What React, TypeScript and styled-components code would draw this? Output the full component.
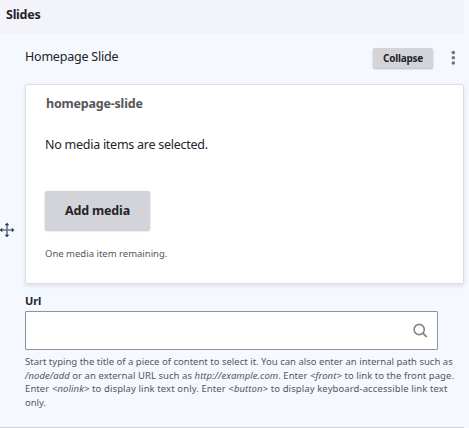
import React from "react";
import styled, { createGlobalStyle } from "styled-components";

const GlobalStyle = createGlobalStyle`
  * { box-sizing: border-box; }
  body {
    margin: 0;
    background: #f5f8ff;
    color: #232429;
    font-family: "Noto Sans", "Open Sans", sans-serif;
    overflow: hidden;
  }
`;

const Field = styled.section`
  width: 464px;
  height: 428px;
  border-bottom: 1px solid #d3d4d9;
`;

const FieldHeader = styled.h4`
  margin: 0;
  height: 34px;
  padding: 0 6px;
  background: #f3f4f9;
  font-size: 12.5px;
  font-weight: 700;
  line-height: 29px;
  letter-spacing: -0.25px;
`;

const Row = styled.div`
  display: grid;
  grid-template-columns: 25px 439px;
`;

const DragHandle = styled.div`
  padding-top: 188px;
  svg { display: block; }
`;

const TopBar = styled.div`
  display: flex;
  align-items: center;
  height: 50px;
  padding: 0 7px 2px 0;
`;

const TypeLabel = styled.span`
  flex: 1;
  padding-bottom: 2px;
  font-size: 12.5px;
  line-height: 18px;
  letter-spacing: -0.22px;
`;

const Button = styled.button<{ $small?: boolean }>`
  display: block;
  border: 0;
  padding: 0;
  border-radius: 2px;
  background: #d3d4d9;
  color: #232429;
  font-family: inherit;
  font-weight: 700;
  box-shadow: 0 1px 2px rgba(0, 0, 0, 0.25);
  width: ${(p) => (p.$small ? 60 : 105)}px;
  height: ${(p) => (p.$small ? 20 : 39)}px;
  font-size: ${(p) => (p.$small ? 10 : 12.5)}px;
  line-height: ${(p) => (p.$small ? 20 : 38)}px;
  letter-spacing: ${(p) => (p.$small ? -0.25 : -0.15)}px;
`;

const MenuDots = styled.svg`
  display: block;
  margin-left: 16px;
`;

const Card = styled.div`
  height: 200px;
  padding: 10px 19px 0;
  border: 1px solid #dcdee5;
  border-radius: 2px;
  background: #fff;
  box-shadow: 0 2px 4px rgba(0, 0, 0, 0.1);
`;

const Legend = styled.div`
  height: 18px;
  padding-left: 1px;
  font-size: 12.5px;
  font-weight: 700;
  line-height: 18px;
  letter-spacing: -0.2px;
  color: #55565b;
`;

const EmptyText = styled.p`
  margin: 23px 0 37px;
  font-size: 12.5px;
  line-height: 18px;
  letter-spacing: -0.26px;
`;

const Remaining = styled.div`
  margin-top: 17px;
  font-size: 9.5px;
  line-height: 14px;
  color: #55565b;
`;

const Label = styled.label`
  display: block;
  margin-top: 8px;
  height: 19px;
  font-size: 11px;
  font-weight: 700;
  line-height: 17px;
  letter-spacing: -0.1px;
`;

const InputBox = styled.div`
  display: flex;
  align-items: center;
  justify-content: flex-end;
  width: 413px;
  height: 39px;
  padding-right: 9px;
  border: 1px solid #8e929c;
  border-radius: 1px;
  background: #fff;
`;

const Help = styled.div`
  margin-top: 5px;
  font-size: 9.5px;
  line-height: 13.7px;
  color: #55565b;
  white-space: nowrap;
`;

const HelpLine = styled.div<{ $spacing?: number }>`
  letter-spacing: ${(p) => p.$spacing ?? 0}px;
`;

export default function App() {
  return (
    <>
      <GlobalStyle />
      <Field>
        <FieldHeader>Slides</FieldHeader>
        <Row>
          <DragHandle>
            <svg width="15" height="16" viewBox="0 0 15 16" fill="none">
              <path d="M7 2v12M1 8h12" stroke="#6a7390" strokeWidth="1.6" />
              <path d="M7 .8 9.3 3.3H4.7ZM7 15.2 4.7 12.7h4.6ZM-.3 8 2.2 5.7v4.6ZM14.3 8 11.8 10.3V5.7Z" fill="#26304f" />
            </svg>
          </DragHandle>
          <div>
            <TopBar>
              <TypeLabel>Homepage Slide</TypeLabel>
              <Button $small>Collapse</Button>
              <MenuDots width="8" height="16" viewBox="0 0 8 16" fill="#75767b">
                <circle cx="4.3" cy="2.6" r="1.8" />
                <circle cx="4.3" cy="7.8" r="1.8" />
                <circle cx="4.3" cy="13" r="1.8" />
              </MenuDots>
            </TopBar>
            <Card>
              <Legend>homepage-slide</Legend>
              <EmptyText>No media items are selected.</EmptyText>
              <Button>Add media</Button>
              <Remaining>One media item remaining.</Remaining>
            </Card>
            <Label>Url</Label>
            <InputBox>
              <svg width="16" height="16" viewBox="0 0 16 16" fill="none" stroke="#85868b" strokeWidth="1.6">
                <circle cx="7.2" cy="6.5" r="5.1" />
                <path d="m10.9 10.2 3.8 3.8" strokeWidth="1.8" />
              </svg>
            </InputBox>
            <Help>
              <HelpLine $spacing={0.01}>Start typing the title of a piece of content to select it. You can also enter an internal path such as</HelpLine>
              <HelpLine $spacing={0.055}><em>/node/add</em> or an external URL such as <em>http://example.com</em>. Enter <em>&lt;front&gt;</em> to link to the front page.</HelpLine>
              <HelpLine $spacing={0.095}>Enter <em>&lt;nolink&gt;</em> to display link text only. Enter <em>&lt;button&gt;</em> to display keyboard-accessible link text</HelpLine>
              <HelpLine>only.</HelpLine>
            </Help>
          </div>
        </Row>
      </Field>
    </>
  );
}
